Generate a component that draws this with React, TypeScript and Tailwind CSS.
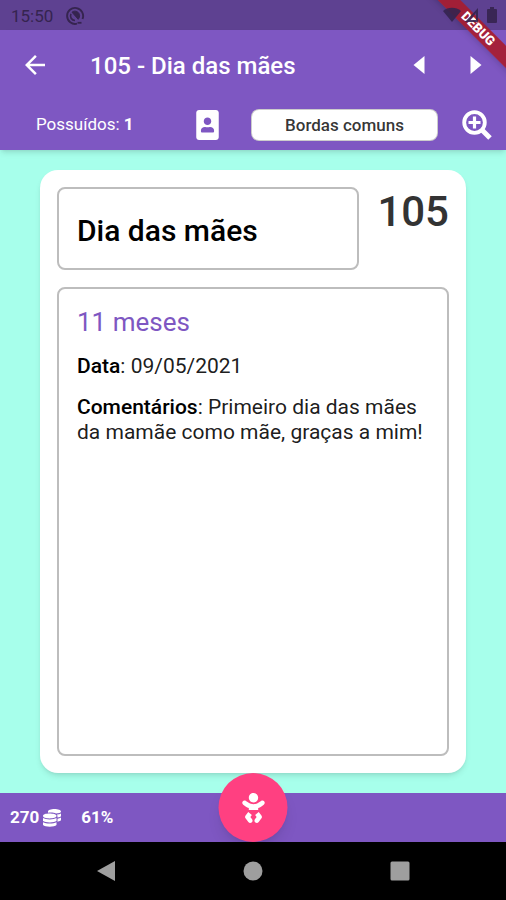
import React from 'react';
import { FaBaby, FaPortrait } from 'react-icons/fa';
import { MdArrowBack } from 'react-icons/md';

const card = {
  number: 105,
  title: 'Dia das mães',
  age: '11 meses',
  date: '09/05/2021',
  comments: 'Primeiro dia das mães da mamãe como mãe, graças a mim!',
  owned: 1,
};

function ZoomInIcon() {
  return (
    <svg viewBox="0 0 30 30" className="size-[30px]" fill="none" stroke="currentColor">
      <circle cx="12.5" cy="12.5" r="10.3" strokeWidth="3.8" />
      <path d="M12.5 6.500v12M6.500 12.500h12" strokeWidth="3.2" />
      <path d="M19.500 19.500l8.500 8.500" strokeWidth="5" />
    </svg>
  );
}

function CoinsIcon() {
  return (
    <svg viewBox="0 0 18 18" className="size-[18px]" fill="currentColor">
      <path d="M5 2.500C5 1 8 0 11.500 0S18 1 18 2.500 15.500 4.300 13 4.600C11 3.600 8 3.400 5 3.800z" />
      <path d="M14 5.600c1.600-.2 3-.6 4-1.200v2.300c0 .9-1.500 1.600-3.500 1.900 0-1-.1-2.300-.5-3zM14.500 9.700c1.400-.2 2.600-.6 3.500-1.200v2.300c0 .9-1.500 1.600-3.500 1.900z" />
      <path d="M0 7C0 5.400 3 4.600 6.500 4.600S13.500 5.400 13.500 7 10 9.400 6.500 9.400 0 8.600 0 7z" />
      <path d="M0 9.100c3 1.700 10.500 1.700 13.500 0v3c-2 1.800-11.500 1.800-13.500 0zM0 13.200c3 1.700 10.500 1.700 13.500 0v2.800c-2 2.300-11.500 2.300-13.500 0z" />
    </svg>
  );
}

function StatusBar() {
  return (
    <div className="flex h-[30px] items-center bg-[#5e4191] px-2 pt-px text-[#35244f]">
      <span className="ml-[3px] text-[17px] leading-5">15:50</span>
      <svg viewBox="0 0 20 20" className="ml-3 size-5" fill="none" stroke="currentColor">
        <path d="M12 17.700A8 8 0 1 1 17.500 13" strokeWidth="1.9" />
        <path d="M10 14.500A4.600 4.600 0 0 1 6 7.800" strokeWidth="1.6" />
        <path d="M7 6.200c3-2.400 7.500-.4 7.600 3.500 0 1.500-.5 2.700-1.400 3.600z" fill="currentColor" />
        <path d="M12.500 16.800h4" strokeWidth="1.8" />
      </svg>
      {/* System icons sit above the debug ribbon */}
      <svg viewBox="0 0 56 20" className="relative z-30 ml-auto h-5 w-14 opacity-90" fill="currentColor">
        <path d="M1 5a14 14 0 0 1 18 0l-9 11z" />
        <path d="M36 2v14H23zM34 7v7h-6z" fillRule="evenodd" />
        <path d="M46 3h2V1h4v2h2a1 1 0 0 1 1 1v12a1 1 0 0 1-1 1h-8a1 1 0 0 1-1-1V4a1 1 0 0 1 1-1z" />
      </svg>
    </div>
  );
}

function DebugBanner() {
  return (
    <div className="pointer-events-none absolute top-0 right-0 z-20 size-20 overflow-hidden">
      <div className="absolute top-[21px] -right-8 w-[120px] rotate-45 bg-[#a81c2e]/90 text-center text-[13px] leading-4 font-black text-white shadow-md">
        DEBUG
      </div>
    </div>
  );
}

export default function App() {
  return (
    <div className="relative flex min-h-screen flex-col bg-[#a7ffeb] font-[Roboto,sans-serif] text-black/90">
      <StatusBar />

      {/* App bar */}
      <header className="z-10 bg-[#7e57c2] text-white shadow-md">
        <div className="flex h-[70px] items-center pr-4 pl-5">
          <button type="button" aria-label="Voltar">
            <MdArrowBack className="size-[30px]" />
          </button>
          <h1 className="ml-10 flex-1 pt-px text-2xl font-medium">
            {card.number} - {card.title}
          </h1>
          <button type="button" aria-label="Anterior" className="mr-[45px]">
            <svg viewBox="0 0 12 18" className="h-[18px] w-3" fill="currentColor">
              <path d="M11.500 0v18L.5 9z" />
            </svg>
          </button>
          <button type="button" aria-label="Próximo" className="mr-2">
            <svg viewBox="0 0 12 18" className="h-[18px] w-3" fill="currentColor">
              <path d="M.5 0v18l11-9z" />
            </svg>
          </button>
        </div>
        <div className="flex h-[50px] items-center pr-[14px] pl-9">
          <p className="flex-1 text-[17px]">
            Possuídos: <b>{card.owned}</b>
          </p>
          <button type="button" aria-label="Retrato">
            <FaPortrait className="h-[30px] w-[23px]" />
          </button>
          <button
            type="button"
            className="ml-8 h-8 w-[187px] rounded-lg border border-black/20 bg-white text-[17px] leading-6 font-medium text-black/80"
          >
            Bordas comuns
          </button>
          <button type="button" aria-label="Ampliar" className="ml-6">
            <ZoomInIcon />
          </button>
        </div>
      </header>

      {/* Card */}
      <main className="flex flex-1 flex-col px-10 pt-5 pb-5">
        <article className="flex flex-1 flex-col gap-[17px] rounded-[18px] bg-white p-[17px] shadow-md">
          <div className="flex gap-[18px]">
            <div className="flex h-[83px] flex-1 items-center rounded-lg border-2 border-[#bdbdbd] px-[18px] pt-1">
              <h2 className="text-3xl font-medium text-black">{card.title}</h2>
            </div>
            <span className="text-[42px] leading-[50px] font-medium text-[#333333]">{card.number}</span>
          </div>
          <div className="flex-1 rounded-lg border-2 border-[#bdbdbd] px-[18px] py-[17px]">
            <p className="text-[26px] leading-8 text-[#7e57c2]">{card.age}</p>
            <p className="mt-4 text-[21px] leading-[25px]">
              <b className="font-medium text-black">Data</b>: {card.date}
            </p>
            <p className="mt-4 text-[21px] leading-[25px]">
              <b className="font-medium text-black">Comentários</b>: {card.comments}
            </p>
          </div>
        </article>
      </main>

      {/* Bottom bar */}
      <footer className="relative flex h-[49px] items-center bg-[#7e57c2] px-[10px] text-[17px] font-bold text-white">
        <span>270</span>
        <span className="ml-1">
          <CoinsIcon />
        </span>
        <span className="ml-5">61%</span>
        <button
          type="button"
          aria-label="Bebê"
          className="absolute -top-5 left-1/2 flex size-[69px] -translate-x-1/2 items-center justify-center rounded-full bg-[#ff4081] shadow-lg"
        >
          <FaBaby className="size-[30px]" />
        </button>
      </footer>

      {/* System navigation */}
      <nav className="flex h-[58px] items-center justify-around bg-black px-8 text-[#9e9e9e]">
        <button type="button" aria-label="Voltar ao anterior">
          <svg viewBox="0 0 20 20" className="size-5" fill="currentColor">
            <path d="M19 0v20L1 10z" />
          </svg>
        </button>
        <button type="button" aria-label="Início">
          <svg viewBox="0 0 20 20" className="size-5" fill="currentColor">
            <circle cx="10" cy="10" r="9.5" />
          </svg>
        </button>
        <button type="button" aria-label="Recentes">
          <svg viewBox="0 0 20 20" className="size-5" fill="currentColor">
            <rect x="0.5" y="0.5" width="19" height="19" rx="1.5" />
          </svg>
        </button>
      </nav>

      <DebugBanner />
    </div>
  );
}
